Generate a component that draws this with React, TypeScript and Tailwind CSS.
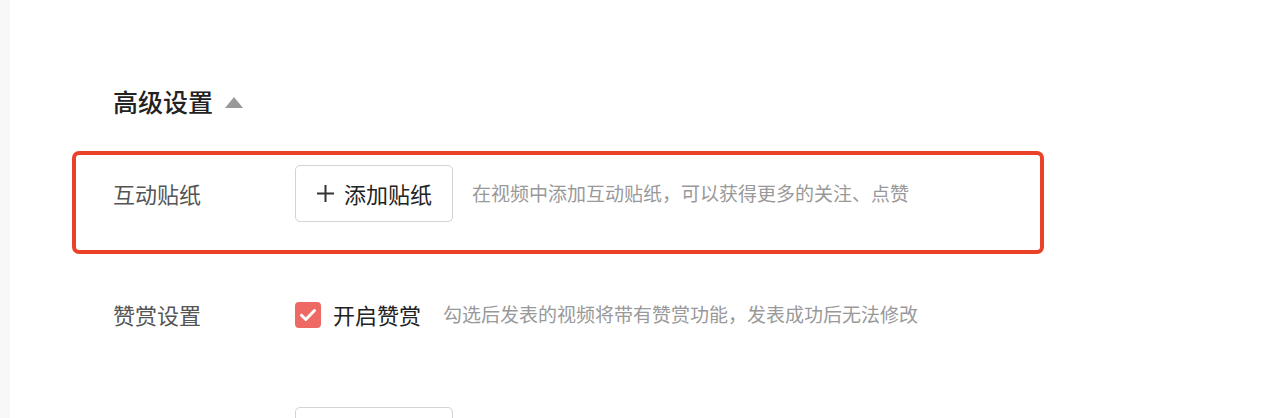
const font = { fontFamily: '"Noto Sans CJK SC", "Noto Sans", sans-serif' };

const PlusIcon = () => (
    <svg width="19" height="19" viewBox="0 0 19 19" fill="none" stroke="#333" strokeWidth="2">
        <path d="M9.5 1v17M1 9.5h17" />
    </svg>
);

const App = () => {
    return (
        <div className="flex h-[418px] w-[1280px] overflow-hidden bg-white" style={font}>
            <div className="w-[10px] shrink-0 bg-[#f8f8f8]" />

            <div className="w-[1034px] shrink-0 pl-[62px] pt-[82px]">
                {/* Heading */}
                <div className="flex h-[40px] items-center pl-[41px]">
                    <span className="text-[25px] font-medium text-[#222]">高级设置</span>
                    <span className="ml-[12px] h-0 w-0 border-x-[9px] border-b-[11px] border-x-transparent border-b-[#999]" />
                </div>

                {/* Interactive sticker row, highlighted */}
                <div className="mt-[29px] rounded-[7px] border-4 border-[#ea4127] pb-[28px] pl-[37px] pt-[10px]">
                    <div className="flex h-[57px] items-center">
                        <span className="w-[182px] text-[22px] text-[#555]">互动贴纸</span>
                        <button className="flex h-[57px] w-[158px] items-center justify-center gap-[9px] rounded-[5px] border border-[#d3d3d3] bg-white text-[22px] text-[#222]">
                            <PlusIcon />
                            <span>添加贴纸</span>
                        </button>
                        <span className="ml-[19px] text-[19px] text-[#999]">
                            在视频中添加互动贴纸，可以获得更多的关注、点赞
                        </span>
                    </div>
                </div>

                {/* Reward row */}
                <div className="mt-[32px] flex h-[57px] items-center pl-[41px]">
                    <span className="w-[182px] text-[22px] text-[#555]">赞赏设置</span>
                    <span className="flex h-[26px] w-[26px] items-center justify-center rounded-[4px] bg-[#ee6964]">
                        <svg width="18" height="14" viewBox="0 0 18 14" fill="none" stroke="#fff" strokeWidth="3" strokeLinecap="round" strokeLinejoin="round">
                            <path d="M2.5 7.2l4.3 4.3L15.5 2.5" />
                        </svg>
                    </span>
                    <span className="ml-[12px] text-[22px] text-[#222]">开启赞赏</span>
                    <span className="ml-[22px] text-[19px] text-[#999]">
                        勾选后发表的视频将带有赞赏功能，发表成功后无法修改
                    </span>
                </div>

                {/* Next row, cut off */}
                <div className="mt-[64px] flex pl-[223px]">
                    <div className="h-[57px] w-[158px] shrink-0 rounded-[5px] border border-[#d3d3d3]" />
                </div>
            </div>
        </div>
    );
};

export default App;
